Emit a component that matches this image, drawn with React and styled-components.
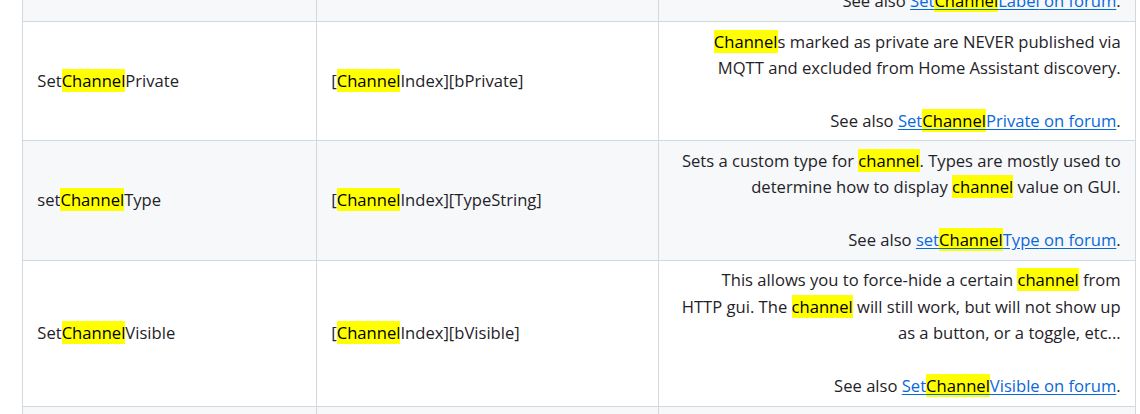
import React from 'react';
import styled, { createGlobalStyle } from 'styled-components';

const GlobalStyle = createGlobalStyle`
  html, body {
    margin: 0;
    padding: 0;
    background: #ffffff;
    overflow: hidden;
  }
  body {
    font-family: "Open Sans", "Noto Sans", sans-serif;
    color: #1f2328;
  }
`;

const Page = styled.div`
  padding: 0 6px 0 22px;
  height: 414px;
  overflow: hidden;
`;

// the page is scrolled: the previous row is mostly above the window
const Table = styled.table`
  width: 1113px;
  margin-top: -72px;
  border-collapse: collapse;
  table-layout: fixed;
  font-family: "Open Sans", "Noto Sans", sans-serif;
  font-size: 16.6px;
  line-height: 26.3px;
  color: #1f2328;
`;

const Row = styled.tr`
  background: ${p => (p.$striped ? '#f6f8fa' : '#ffffff')};
`;

const Cell = styled.td`
  border: 1px solid #d1d9e0;
  padding: 6.6px 14.3px;
  vertical-align: middle;
  text-align: ${p => p.$align || 'left'};
`;

const Mark = styled.mark`
  background: #ffff00;
  color: #000000;
  padding: 0;
`;

const ForumLink = styled.a`
  color: #0969da;
  text-decoration: underline;
  text-underline-offset: 2px;
`;

const highlight = (text) =>
  text.split(/(channel)/i).map((part, i) =>
    /^channel$/i.test(part) ? <Mark key={i}>{part}</Mark> : part
  );

// description lines as they wrap in the docs table
const rows = [
  {
    name: 'SetChannelLabel',
    args: '[ChannelIndex][Str]',
    desc: ['Sets a custom label for a channel, shown on GUI.'],
  },
  {
    name: 'SetChannelPrivate',
    args: '[ChannelIndex][bPrivate]',
    desc: [
      'Channels marked as private are NEVER published via',
      'MQTT and excluded from Home Assistant discovery.',
    ],
  },
  {
    name: 'setChannelType',
    args: '[ChannelIndex][TypeString]',
    desc: [
      'Sets a custom type for channel. Types are mostly used to',
      'determine how to display channel value on GUI.',
    ],
  },
  {
    name: 'SetChannelVisible',
    args: '[ChannelIndex][bVisible]',
    desc: [
      'This allows you to force-hide a certain channel from',
      'HTTP gui. The channel will still work, but will not show up',
      'as a button, or a toggle, etc...',
    ],
  },
  {
    name: 'SetStartValue',
    args: '[Channel][Value]',
    desc: ['Sets the startup value for a channel.'],
  },
];

const App = () => {
  return (
    <>
      <GlobalStyle />
      <Page>
        <Table>
          <colgroup>
            <col style={{ width: 294 }} />
            <col style={{ width: 342 }} />
            <col style={{ width: 477 }} />
          </colgroup>
          <tbody>
            {rows.map((row, i) => (
              <Row key={row.name} $striped={i % 2 === 0}>
                <Cell>{highlight(row.name)}</Cell>
                <Cell>{highlight(row.args)}</Cell>
                <Cell $align="right">
                  {row.desc.map((line, j) => (
                    <React.Fragment key={j}>
                      {highlight(line)}
                      <br />
                    </React.Fragment>
                  ))}
                  <br />
                  See also <ForumLink href="#">{highlight(row.name)} on forum</ForumLink>.
                </Cell>
              </Row>
            ))}
          </tbody>
        </Table>
      </Page>
    </>
  );
};

export default App;
